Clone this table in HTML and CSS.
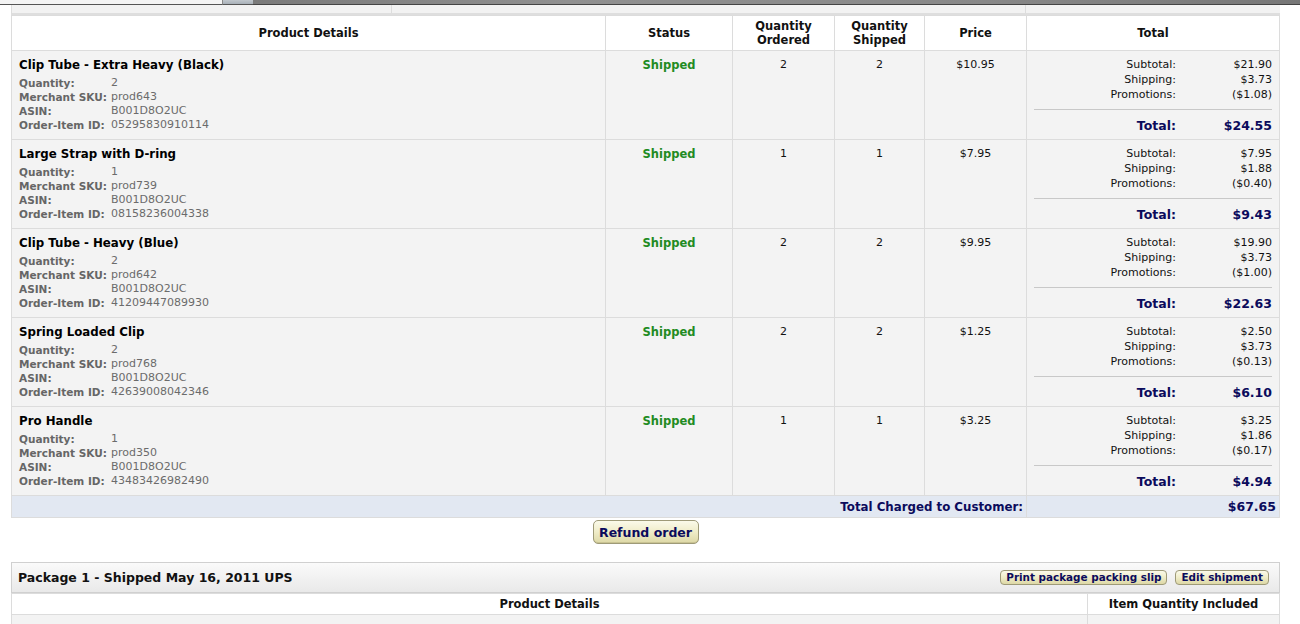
FILE: index.html
```html
<!DOCTYPE html>
<html>
<head>
<meta charset="utf-8">
<link rel="stylesheet" href="styles.css">
</head>
<body>
<div class="topbar"><div class="tb-a"></div><div class="tb-b"></div><div class="tb-c"></div></div>
<div class="page">
  <div class="subbar"><div class="sb-a"></div><div class="sb-b"></div><div class="sb-c"></div></div>
  <table class="items">
    <colgroup><col class="c1"><col class="c2"><col class="c3"><col class="c4"><col class="c5"><col class="c6"></colgroup>
    <thead>
      <tr><th>Product Details</th><th>Status</th><th>Quantity<br>Ordered</th><th>Quantity<br>Shipped</th><th>Price</th><th>Total</th></tr>
    </thead>
    <tbody>
      <tr>
        <td class="prod"><div class="pname">Clip Tube - Extra Heavy (Black)</div>
          <dl class="meta"><dt>Quantity:</dt><dd>2</dd><dt>Merchant SKU:</dt><dd>prod643</dd><dt>ASIN:</dt><dd>B001D8O2UC</dd><dt>Order-Item ID:</dt><dd>05295830910114</dd></dl></td>
        <td class="status">Shipped</td><td class="num">2</td><td class="num">2</td><td class="num">$10.95</td>
        <td class="tot"><div class="sums"><span>Subtotal:</span><span>$21.90</span><span>Shipping:</span><span>$3.73</span><span>Promotions:</span><span>($1.08)</span></div>
          <div class="grand"><span>Total:</span><span>$24.55</span></div></td>
      </tr>
      <tr>
        <td class="prod"><div class="pname">Large Strap with D-ring</div>
          <dl class="meta"><dt>Quantity:</dt><dd>1</dd><dt>Merchant SKU:</dt><dd>prod739</dd><dt>ASIN:</dt><dd>B001D8O2UC</dd><dt>Order-Item ID:</dt><dd>08158236004338</dd></dl></td>
        <td class="status">Shipped</td><td class="num">1</td><td class="num">1</td><td class="num">$7.95</td>
        <td class="tot"><div class="sums"><span>Subtotal:</span><span>$7.95</span><span>Shipping:</span><span>$1.88</span><span>Promotions:</span><span>($0.40)</span></div>
          <div class="grand"><span>Total:</span><span>$9.43</span></div></td>
      </tr>
      <tr>
        <td class="prod"><div class="pname">Clip Tube - Heavy (Blue)</div>
          <dl class="meta"><dt>Quantity:</dt><dd>2</dd><dt>Merchant SKU:</dt><dd>prod642</dd><dt>ASIN:</dt><dd>B001D8O2UC</dd><dt>Order-Item ID:</dt><dd>41209447089930</dd></dl></td>
        <td class="status">Shipped</td><td class="num">2</td><td class="num">2</td><td class="num">$9.95</td>
        <td class="tot"><div class="sums"><span>Subtotal:</span><span>$19.90</span><span>Shipping:</span><span>$3.73</span><span>Promotions:</span><span>($1.00)</span></div>
          <div class="grand"><span>Total:</span><span>$22.63</span></div></td>
      </tr>
      <tr>
        <td class="prod"><div class="pname">Spring Loaded Clip</div>
          <dl class="meta"><dt>Quantity:</dt><dd>2</dd><dt>Merchant SKU:</dt><dd>prod768</dd><dt>ASIN:</dt><dd>B001D8O2UC</dd><dt>Order-Item ID:</dt><dd>42639008042346</dd></dl></td>
        <td class="status">Shipped</td><td class="num">2</td><td class="num">2</td><td class="num">$1.25</td>
        <td class="tot"><div class="sums"><span>Subtotal:</span><span>$2.50</span><span>Shipping:</span><span>$3.73</span><span>Promotions:</span><span>($0.13)</span></div>
          <div class="grand"><span>Total:</span><span>$6.10</span></div></td>
      </tr>
      <tr>
        <td class="prod"><div class="pname">Pro Handle</div>
          <dl class="meta"><dt>Quantity:</dt><dd>1</dd><dt>Merchant SKU:</dt><dd>prod350</dd><dt>ASIN:</dt><dd>B001D8O2UC</dd><dt>Order-Item ID:</dt><dd>43483426982490</dd></dl></td>
        <td class="status">Shipped</td><td class="num">1</td><td class="num">1</td><td class="num">$3.25</td>
        <td class="tot"><div class="sums"><span>Subtotal:</span><span>$3.25</span><span>Shipping:</span><span>$1.86</span><span>Promotions:</span><span>($0.17)</span></div>
          <div class="grand"><span>Total:</span><span>$4.94</span></div></td>
      </tr>
      <tr class="charged">
        <td colspan="5" class="ch-label">Total Charged to Customer:</td>
        <td class="ch-val">$67.65</td>
      </tr>
    </tbody>
  </table>
  <div class="refund-row"><button class="btn btn-lg">Refund order</button></div>

  <div class="pkg-head">
    <span class="pkg-title">Package 1 - Shipped May 16, 2011 UPS</span>
    <span class="pkg-actions"><button class="btn btn-sm">Print package packing slip</button><button class="btn btn-sm">Edit shipment</button></span>
  </div>
  <table class="pkg">
    <thead><tr><th class="p1">Product Details</th><th class="p2">Item Quantity Included</th></tr></thead>
    <tbody><tr><td class="prod"><div class="pname pkg-name">Clip Tube - Extra Heavy (Black)</div></td><td class="num">2</td></tr></tbody>
  </table>
</div>
</body>
</html>
```
FILE: styles.css
```css
html, body {
  margin: 0;
  padding: 0;
  background: #fff;
}
body {
  font-family: "DejaVu Sans", Verdana, sans-serif;
  font-size: 11px;
  color: #000;
  overflow: hidden;
}
.topbar {
  display: flex;
  height: 5px;
}
.tb-a {
  width: 223px;
  background: #f4f4f4;
  border-bottom: 1px solid #555;
  border-right: 1px solid #888;
  box-sizing: border-box;
}
.tb-b {
  width: 30px;
  background: linear-gradient(#c0c6cc, #a8b0b8);
  border-bottom: 1px solid #555;
  box-sizing: border-box;
}
.tb-c {
  flex: 1;
  background: linear-gradient(90deg, #7a7a7a, #909090 30%, #888 70%, #777);
  border-bottom: 1px solid #444;
  box-sizing: border-box;
}
.page {
  padding: 0 20px 0 11px;
}
.subbar {
  display: flex;
  height: 8px;
  background: #f2f2f2;
  border-bottom: 2px solid #dedede;
  border-left: 1px solid #ddd;
}
.sb-a { width: 379px; border-right: 1px solid #ddd; }
.sb-b { width: 633px; border-right: 1px solid #ddd; }
.sb-c { flex: 1; }

table {
  border-collapse: collapse;
  width: 100%;
  table-layout: fixed;
}
.items col.c1 { width: 594px; }
.items col.c2 { width: 127px; }
.items col.c3 { width: 102px; }
.items col.c4 { width: 90px; }
.items col.c5 { width: 102px; }
.items col.c6 { width: auto; }

th, td {
  border: 1px solid #dcdcdc;
  padding: 0;
}
th {
  font-weight: bold;
  font-size: 11.5px;
  line-height: 13.5px;
  text-align: center;
  vertical-align: middle;
  height: 33px;
  background: #fff;
  color: #111;
  padding-top: 1px;
}
.items tbody tr {
  height: 89px;
}
.items tbody td {
  background: #f3f3f3;
  vertical-align: top;
}
td.prod {
  padding: 7px 7px 0 7px;
}
.pname {
  font-weight: bold;
  font-size: 11.8px;
  line-height: 15px;
  color: #000;
  margin-bottom: 3px;
}
.meta {
  display: grid;
  grid-template-columns: 92px auto;
  margin: 0;
  line-height: 14px;
  font-size: 11px;
  color: #666;
}
.meta dt {
  font-weight: bold;
  font-size: 10.5px;
  color: #666;
  white-space: nowrap;
}
.meta dd {
  margin: 0;
  color: #6b6b6b;
}
td.status {
  text-align: center;
  color: #228b22;
  font-weight: bold;
  font-size: 11.5px;
  padding-top: 7px;
  line-height: 14px;
}
td.num {
  text-align: center;
  padding-top: 7px;
  font-size: 11px;
  line-height: 14px;
  color: #111;
}
td.tot {
  padding: 6px 7px 0 7px;
}
.sums {
  display: grid;
  grid-template-columns: 1fr 96px;
  line-height: 15px;
  font-size: 11px;
  color: #111;
  text-align: right;
  padding-bottom: 7px;
  border-bottom: 1px solid #c8c8c8;
}
.grand {
  display: grid;
  grid-template-columns: 1fr 96px;
  text-align: right;
  font-weight: bold;
  font-size: 12.5px;
  color: #0b0b5c;
  padding-top: 8px;
  line-height: 16px;
}
.items tr.charged {
  height: 22px;
}
.items tr.charged td {
  background: #e2e8f2;
  font-weight: bold;
  font-size: 11.8px;
  color: #0b0b5c;
  vertical-align: middle;
  text-align: right;
}
.ch-label { padding-right: 3px !important; }
.ch-val { padding-right: 3px !important; font-size: 12.5px !important; }

.refund-row {
  display: flex;
  justify-content: center;
  padding: 2px 0 0 0;
  height: 44px;
  box-sizing: border-box;
}
.btn {
  font-family: inherit;
  font-weight: bold;
  color: #0b0b5c;
  background: linear-gradient(#fbfaea, #efecc8 50%, #ddd8a6);
  border: 1px solid #9e9a78;
  cursor: pointer;
  padding: 0;
}
.btn-lg {
  font-size: 12.5px;
  height: 24px;
  width: 106px;
  border-radius: 5px;
  box-shadow: inset 0 -1px 0 #c9c393;
}
.btn-sm {
  font-size: 10.4px;
  height: 15px;
  line-height: 13px;
  border-radius: 4px;
  padding: 0 5px;
}
.pkg-head {
  display: flex;
  align-items: center;
  justify-content: space-between;
  height: 29px;
  border: 1px solid #d0d0d0;
  background: linear-gradient(#fafafa, #e9e9e9);
  padding: 0 10px 0 6px;
}
.pkg-title {
  font-weight: bold;
  font-size: 12.5px;
  color: #111;
}
.pkg-actions {
  display: flex;
  gap: 8px;
}
.pkg th {
  height: 19px;
  font-size: 11.5px;
}
.pkg th.p2 { width: 191px; }
.pkg td {
  background: #f3f3f3;
  vertical-align: top;
  height: 60px;
}
.pkg-name {
  padding-left: 70px;
  padding-top: 4px;
}
```
